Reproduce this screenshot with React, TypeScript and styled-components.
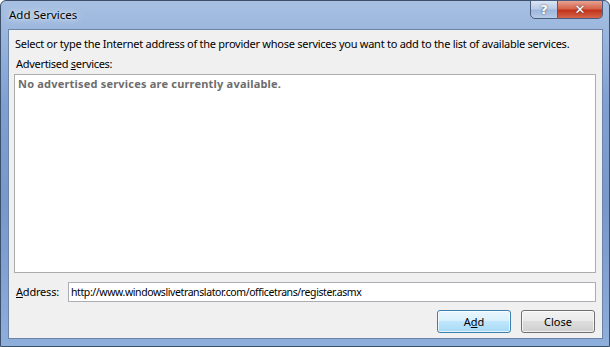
import React from "react";
import styled, { createGlobalStyle } from "styled-components";

const Global = createGlobalStyle`
  html, body {
    margin: 0;
    padding: 0;
    background: #ffffff;
  }
  body {
    font-family: "Noto Sans", "Open Sans", sans-serif;
  }
`;

const Window = styled.div`
  width: 610px;
  height: 347px;
  box-sizing: border-box;
  display: flex;
  flex-direction: column;
  border: 1px solid #3c4f6b;
  border-radius: 6px 6px 0 0;
  background: linear-gradient(180deg, #a7c0e2 0%, #7f9fd2 30%, #7897cb 60%, #8eaedb 100%);
  padding: 0 6px 7px 7px;
`;

const TitleBar = styled.div`
  height: 28px;
  display: flex;
  align-items: flex-start;
`;

const Title = styled.div`
  flex: 1;
  padding: 6px 0 0 1px;
  font-size: 11.5px;
  color: #000;
  text-shadow: 0 0 8px rgba(255, 255, 255, 0.9), 0 0 3px rgba(255, 255, 255, 0.8);
`;

const Caption = styled.div`
  display: flex;
  margin-top: -1px;
`;

const CaptionButton = styled.div<{ $close?: boolean }>`
  width: ${(p) => (p.$close ? "45px" : "28px")};
  height: 19px;
  display: flex;
  align-items: center;
  justify-content: center;
  box-sizing: border-box;
  border: 1px solid #4a5d7e;
  border-left-width: ${(p) => (p.$close ? "0" : "1px")};
  border-radius: ${(p) => (p.$close ? "0 0 5px 0" : "0 0 0 5px")};
  background: ${(p) =>
    p.$close
      ? "linear-gradient(180deg, #e8a393 0%, #d7634c 45%, #c2331a 55%, #d5664a 100%)"
      : "linear-gradient(180deg, #dbe6f4 0%, #b9cbe6 45%, #9fb6dc 55%, #b6cbe8 100%)"};
  color: #fff;
  font-size: 13px;
  font-weight: bold;
  font-family: "DejaVu Sans", sans-serif;
  text-shadow: 0 0 2px #3a3a3a;
`;

const Client = styled.div`
  flex: 1;
  background: #f0f0f0;
  border: 1px solid #6d84a9;
  display: flex;
  flex-direction: column;
  padding: 6px 5px 5px 5px;
  font-size: 11px;
  line-height: 16px;
  color: #000;
`;

const Prompt = styled.div`
  padding-left: 1px;
  letter-spacing: -0.26px;
  white-space: nowrap;
`;

const Label = styled.div`
  padding: 4px 0 0 2px;
  margin-bottom: 2px;
  letter-spacing: -0.3px;
`;

const U = styled.span`
  text-decoration: underline;
`;

const ServiceList = styled.div`
  flex: 1;
  background: #fff;
  border: 1px solid #adadad;
  margin-right: 1px;
  padding: 1px 3px;
`;

const EmptyText = styled.div`
  color: #6d6d6d;
  font-weight: bold;
  letter-spacing: 0.2px;
`;

const AddressRow = styled.div`
  display: flex;
  align-items: center;
  margin-top: 9px;
  margin-right: 1px;
`;

const AddressLabel = styled.div`
  width: 52px;
  padding-left: 2px;
  letter-spacing: -0.2px;
`;

const AddressInput = styled.div`
  flex: 1;
  height: 20px;
  box-sizing: border-box;
  background: #fff;
  border: 1px solid #abadb3;
  padding: 1px 2px;
  font-size: 10.5px;
  line-height: 16px;
  letter-spacing: -0.4px;
  white-space: nowrap;
`;

const Buttons = styled.div`
  display: flex;
  justify-content: flex-end;
  gap: 10px;
  margin-top: 8px;
  margin-right: 2px;
`;

const Button = styled.div<{ $default?: boolean }>`
  width: 74px;
  height: 23px;
  box-sizing: border-box;
  display: flex;
  align-items: center;
  justify-content: center;
  border-radius: 3px;
  border: 1px solid ${(p) => (p.$default ? "#3c7fb1" : "#707070")};
  background: ${(p) =>
    p.$default
      ? "linear-gradient(180deg, #eaf6fd 0%, #d9f0fc 45%, #bee6fd 50%, #a7d9f5 100%)"
      : "linear-gradient(180deg, #f2f2f2 0%, #ebebeb 45%, #dddddd 50%, #cfcfcf 100%)"};
  box-shadow: inset 0 0 0 1px rgba(255, 255, 255, 0.7);
`;

export default function App() {
  return (
    <>
      <Global />
      <Window>
        <TitleBar>
          <Title>Add Services</Title>
          <Caption>
            <CaptionButton>?</CaptionButton>
            <CaptionButton $close>✕</CaptionButton>
          </Caption>
        </TitleBar>
        <Client>
          <Prompt>
            Select or type the Internet address of the provider whose services you want to add to the
            list of available services.
          </Prompt>
          <Label>
            Advertised <U>s</U>ervices:
          </Label>
          <ServiceList>
            <EmptyText>No advertised services are currently available.</EmptyText>
          </ServiceList>
          <AddressRow>
            <AddressLabel>
              <U>A</U>ddress:
            </AddressLabel>
            <AddressInput>http://www.windowslivetranslator.com/officetrans/register.asmx</AddressInput>
          </AddressRow>
          <Buttons>
            <Button $default>
              A<U>d</U>d
            </Button>
            <Button>Close</Button>
          </Buttons>
        </Client>
      </Window>
    </>
  );
}
